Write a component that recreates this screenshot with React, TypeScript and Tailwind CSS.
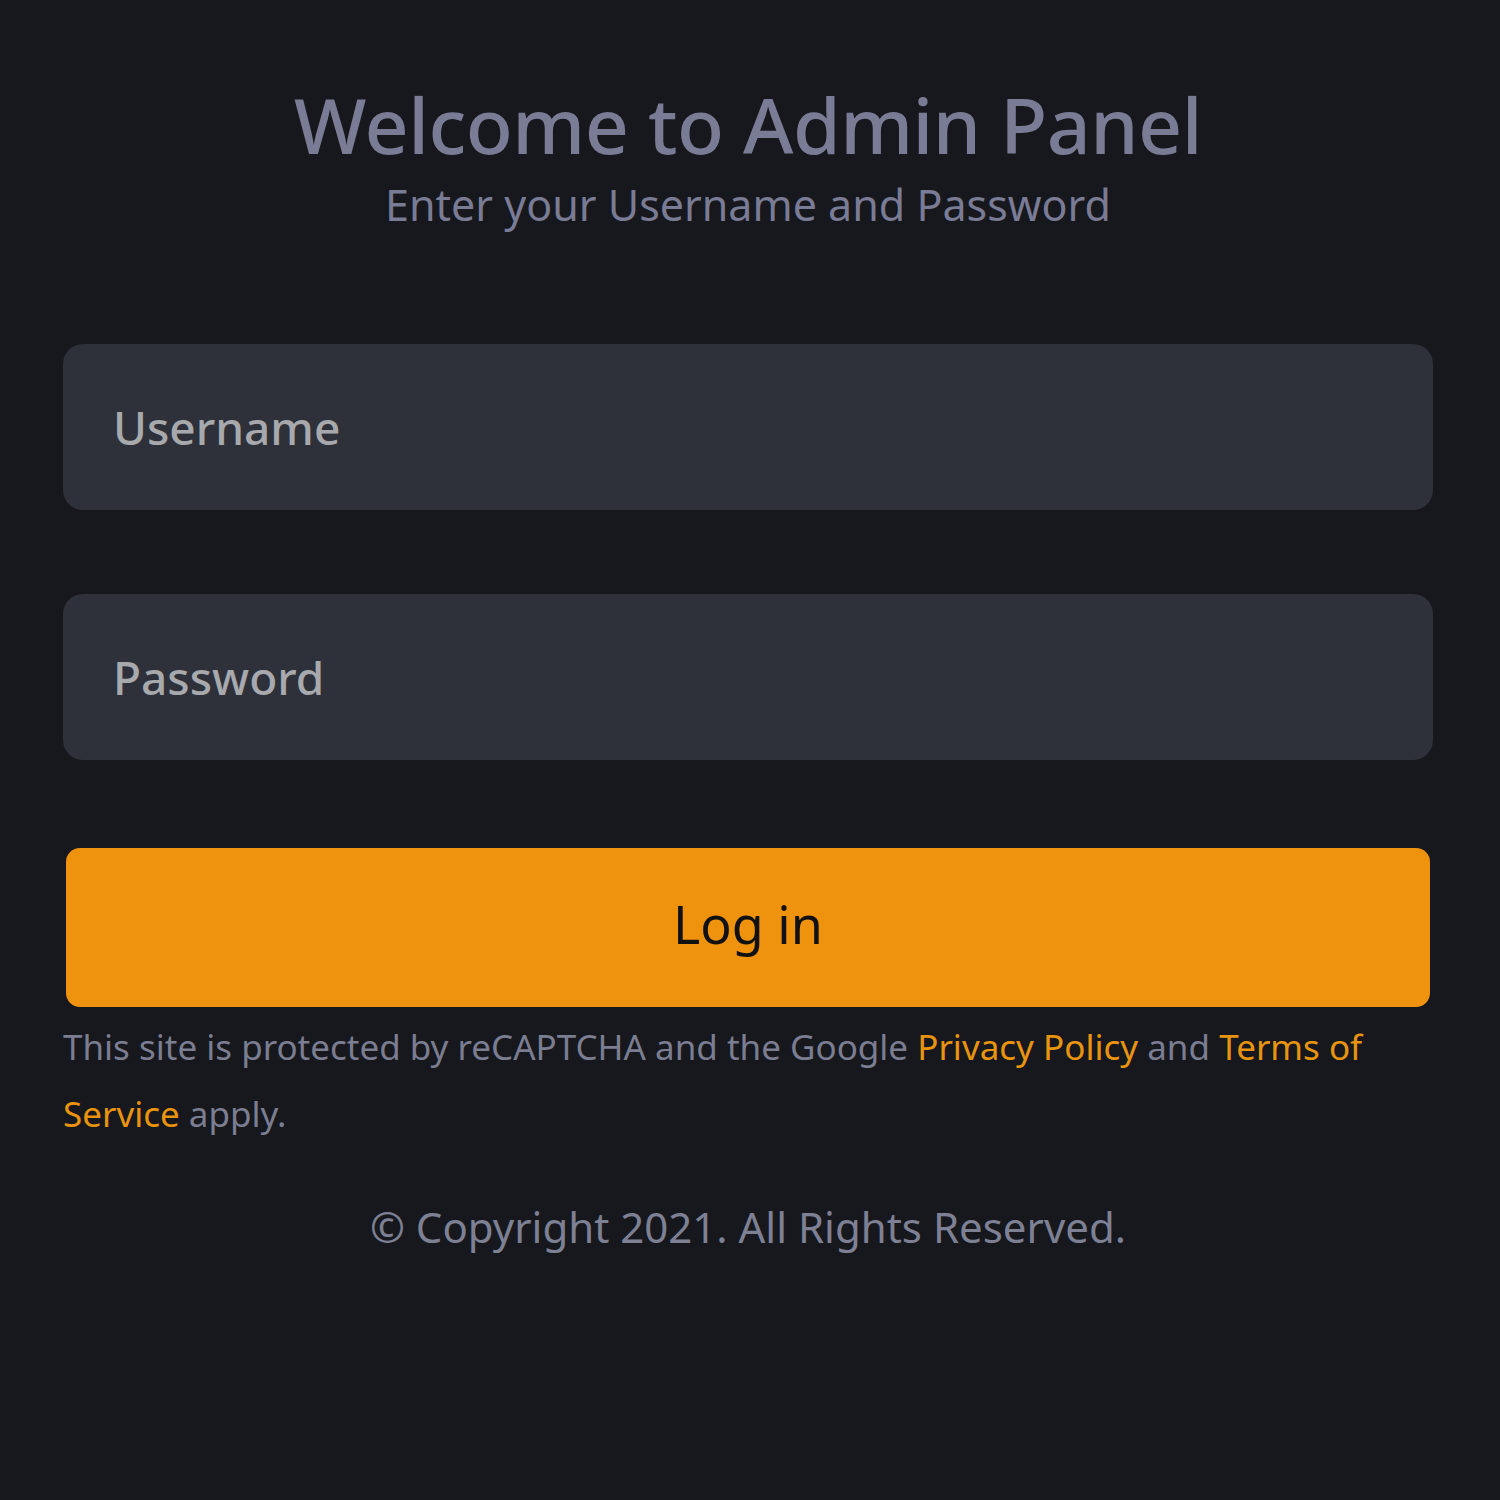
import * as React from "react";

export default function App() {
  return (
    <div
      className="min-h-[1500px] w-full bg-[#16181d] pl-[63px] pr-[67px] pt-[85px]"
      style={{ fontFamily: '"Noto Sans", "Open Sans", sans-serif' }}
    >
      <h1 className="text-center text-[77px] font-medium leading-[80px] tracking-[-0.5px] text-[#7a7b95]">
        Welcome to Admin Panel
      </h1>
      <p className="mt-[16px] text-center text-[43px] leading-[48px] text-[#7a7b95]">
        Enter your Username and Password
      </p>

      <form className="mt-[115px] flex flex-col" onSubmit={(e) => e.preventDefault()}>
        <input
          type="text"
          placeholder="Username"
          className="h-[166px] w-full rounded-[20px] bg-[#2e313a] px-[50px] text-[46px] font-medium text-[#c8c9cc] placeholder:text-[#a7a9ad] outline-none"
        />
        <input
          type="password"
          placeholder="Password"
          className="mt-[84px] h-[166px] w-full rounded-[20px] bg-[#2e313a] px-[50px] text-[46px] font-medium text-[#c8c9cc] placeholder:text-[#a7a9ad] outline-none"
        />
        <div className="mt-[88px] px-[3px]">
          <button
            type="submit"
            className="h-[159px] w-full rounded-[14px] bg-[#ef930f] pb-[8px] text-[52px] leading-none text-[#111111]"
          >
            Log in
          </button>
        </div>
      </form>

      <p className="mt-[6px] text-[35px] leading-[67px] text-[#7b7d91]">
        This site is protected by reCAPTCHA and the Google{" "}
        <a href="#" className="text-[#e8940f]">Privacy Policy</a> and{" "}
        <a href="#" className="text-[#e8940f]">Terms of Service</a> apply.
      </p>

      <p className="mt-[56px] text-center text-[42px] leading-[48px] text-[#7e8094]">
        © Copyright 2021. All Rights Reserved.
      </p>
    </div>
  );
}
